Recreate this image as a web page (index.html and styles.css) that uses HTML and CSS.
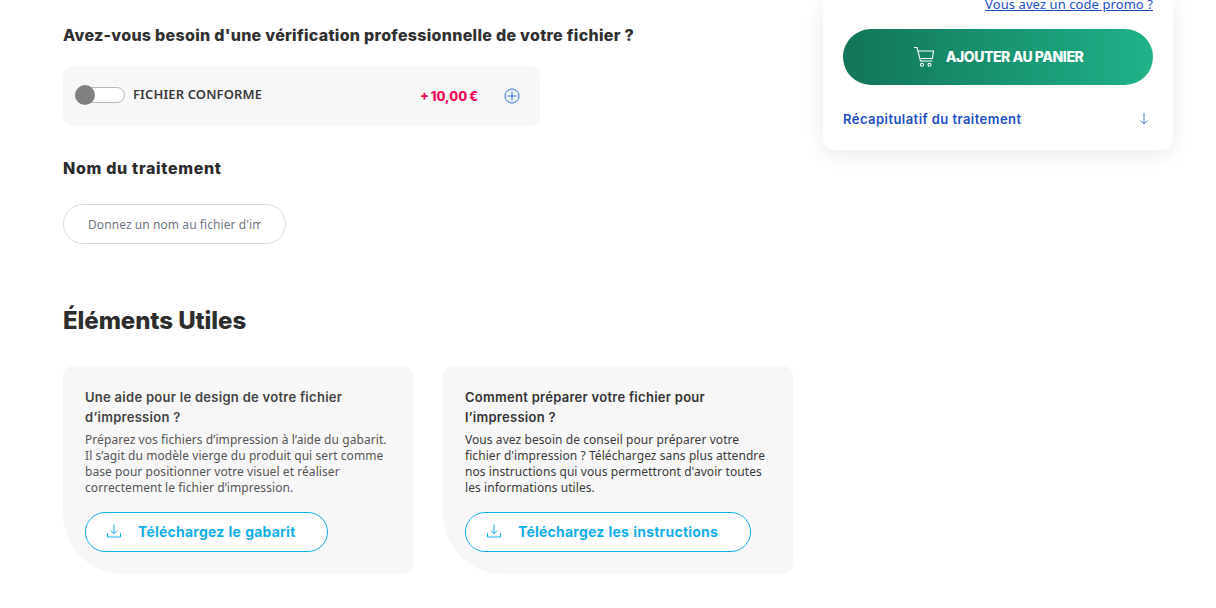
FILE: index.html
```html
<!DOCTYPE html>
<html lang="fr">
<head>
<meta charset="utf-8">
<title>Vérification du fichier</title>
<link rel="stylesheet" href="styles.css">
</head>
<body>
<div class="page">
  <main class="main">
    <h2 class="question">Avez-vous besoin d'une vérification professionnelle de votre fichier ?</h2>
    <div class="option">
      <span class="toggle"><span class="knob"></span></span>
      <span class="option-label">FICHIER CONFORME</span>
      <span class="price">+ 10,00 €</span>
      <svg class="plus" viewBox="0 0 16 16" width="16" height="16"><circle cx="8" cy="8" r="7" fill="none" stroke="#2f6fd6" stroke-width="1"/><path d="M3.500 8h9M8 3.500v9" fill="none" stroke="#2f6fd6" stroke-width="1"/></svg>
    </div>
    <h3 class="name-title">Nom du traitement</h3>
    <div class="name-input"><span class="placeholder">Donnez un nom au fichier d'impression</span></div>
    <h2 class="useful">Éléments Utiles</h2>
    <div class="cards">
      <section class="card">
        <h4>Une aide pour le design de votre fichier d’impression ?</h4>
        <p>Préparez vos fichiers d’impression à l’aide du gabarit. Il s’agit du modèle vierge du produit qui sert comme base pour positionner votre visuel et réaliser correctement le fichier d’impression.</p>
        <a class="dl">
          <svg viewBox="0 0 16 16" width="16" height="16"><path d="M8 1.500v9M4.800 7.500 8 10.700l3.200-3.200M1.500 10v4h13v-4" fill="none" stroke="#12aee8" stroke-width="1"/></svg>
          <span>Téléchargez le gabarit</span>
        </a>
      </section>
      <section class="card card-dark">
        <h4>Comment préparer votre fichier pour l’impression ?</h4>
        <p>Vous avez besoin de conseil pour préparer votre fichier d'impression ? Téléchargez sans plus attendre nos instructions qui vous permettront d'avoir toutes les informations utiles.</p>
        <a class="dl">
          <svg viewBox="0 0 16 16" width="16" height="16"><path d="M8 1.500v9M4.800 7.500 8 10.700l3.200-3.200M1.500 10v4h13v-4" fill="none" stroke="#12aee8" stroke-width="1"/></svg>
          <span>Téléchargez les instructions</span>
        </a>
      </section>
    </div>
  </main>
  <aside class="summary">
    <a class="promo">Vous avez un code promo ?</a>
    <button class="add">
      <svg viewBox="0 0 22 22" width="22" height="22"><path d="M1 1.500h3l3.500 13.500h12M5 5h15.500l-1 7.500h-11.500" fill="none" stroke="#fff" stroke-width="1.100"/><circle cx="9" cy="18.800" r="1.500" fill="none" stroke="#fff" stroke-width="1.100"/><circle cx="16.500" cy="18.800" r="1.500" fill="none" stroke="#fff" stroke-width="1.100"/></svg>
      <span>AJOUTER AU PANIER</span>
    </button>
    <div class="recap">
      <span>Récapitulatif du traitement</span>
      <svg viewBox="0 0 10 14" width="10" height="14"><path d="M5 1v11M1.500 8.500 5 12l3.500-3.500" fill="none" stroke="#5b7fd0" stroke-width="1"/></svg>
    </div>
  </aside>
</div>
</body>
</html>
```
FILE: styles.css
```css
* { box-sizing: border-box; }
html, body { margin: 0; height: 100%; overflow: hidden; background: #fff; }
body { font-family: "Noto Sans", "Open Sans", sans-serif; color: #2d2d2d; }
.page { display: flex; align-items: flex-start; height: 608px; padding-left: 63px; overflow: hidden; }
.main { width: 730px; flex: none; padding-top: 24px; }
h2, h3, h4, p { margin: 0; }
.question { font: 800 16px/22px Inter, sans-serif; letter-spacing: 0.29px; color: #303030; }
.option { width: 477px; height: 60px; margin-top: 20px; background: #f7f7f7; border-radius: 10px; display: flex; align-items: center; padding: 0 20px 0 12px; }
.toggle { position: relative; width: 50px; height: 16px; border: 1px solid #b9b9b9; background: #fff; border-radius: 8px; margin: -3px 8px 0 0; flex: none; }
.knob { position: absolute; left: -1px; top: -3px; width: 20px; height: 20px; border-radius: 50%; background: #808080; }
.option-label { font: 600 13px/18px "Noto Sans", sans-serif; letter-spacing: .12px; color: #3b3b3b; margin-top: -4px; }
.price { margin-left: auto; font: 800 13px/18px Inter, sans-serif; word-spacing: -1px; color: #ef0a5a; }
.plus { margin-left: 26px; flex: none; }
.name-title { margin-top: 31px; font: 800 16px/22px Inter, sans-serif; letter-spacing: .68px; color: #2b2b2b; }
.name-input { width: 223px; height: 40px; margin-top: 25px; border: 1px solid #dcdcdc; border-radius: 20px; padding: 0 24px; display: flex; align-items: center; font-size: 12px; letter-spacing: .08px; color: #6f7680; }
.placeholder { white-space: nowrap; overflow: hidden; }
.useful { margin-top: 60px; font: 800 24px/34px Inter, sans-serif; letter-spacing: -.07px; color: #2d2d2d; }
.cards { display: flex; gap: 30px; margin-top: 28px; }
.card { width: 350px; height: 208px; background: #f7f7f7; border-radius: 10px 10px 10px 60px; padding: 21px 20px 21px 22px; }
.card h4 { font: 600 13px/20px Inter, sans-serif; letter-spacing: .28px; color: #444; }
.card p { font-size: 12px; line-height: 16px; letter-spacing: .07px; color: #555; margin-top: 5px; }
.card-dark h4 { color: #333; }
.card-dark p { color: #3a3a3a; }
.dl { display: inline-flex; align-items: center; height: 40px; margin-top: 16px; padding: 0 32px 0 20px; background: #fff; border: 1px solid #12aee8; border-radius: 20px; font: 700 14px/20px Inter, sans-serif; letter-spacing: .22px; word-spacing: .5px; color: #12aee8; }
.dl svg { margin-right: 16px; margin-top: -3px; flex: none; }
.summary { width: 350px; height: 150px; margin-left: 30px; background: #fff; border-radius: 0 0 12px 12px; box-shadow: 0 4px 20px rgba(0,0,0,.09); padding: 0 20px; flex: none; }
.promo { display: block; text-align: right; font-size: 13px; line-height: 18px; letter-spacing: .08px; margin-top: -5px; color: #1d4fbf; text-decoration: underline; }
.add { width: 310px; height: 56px; margin-top: 16px; border: 0; border-radius: 28px; background: linear-gradient(90deg, #127459, #1fb288); color: #fff; display: flex; align-items: center; justify-content: center; gap: 11px; font: 800 14px/20px Inter, sans-serif; letter-spacing: -.45px; padding: 0; }
.recap { display: flex; justify-content: space-between; align-items: center; margin-top: 24px; padding-right: 4px; font: 600 13px/20px Inter, sans-serif; letter-spacing: .45px; color: #1d4fbf; }
```
